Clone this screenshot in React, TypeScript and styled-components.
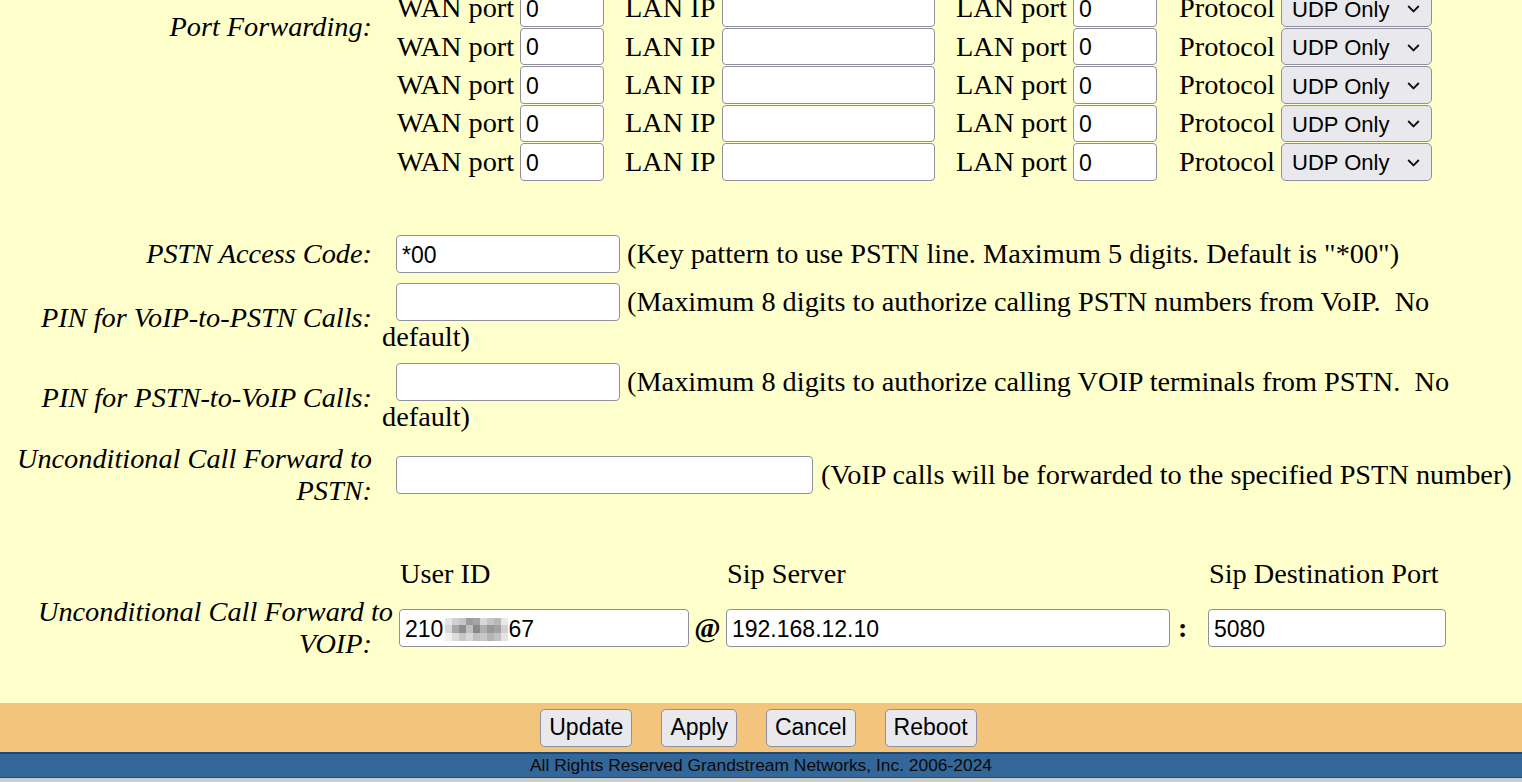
import React from "react";
import styled, { createGlobalStyle } from "styled-components";

const GlobalStyle = createGlobalStyle`
  html, body {
    margin: 0;
    padding: 0;
    height: 100%;
    overflow: hidden;
  }
  body {
    background: #ffffcc;
    color: #000;
    font-family: "Liberation Serif", "Times New Roman", serif;
  }
  #root {
    height: 100%;
  }
`;

const PORT_ROWS = 8;

const MOSAIC = [
  ["#e6e6e6", "#d2d2d2", "#c6c6c6", "#9c9c9c", "#a4a4a4", "#d8d8d8", "#c4c4c4", "#b8b8b8", "#e8e8e8"],
  ["#d8d8d8", "#a8a8a8", "#8e8e8e", "#c0c0c0", "#888888", "#b0b0b0", "#989898", "#a2a2a2", "#d0d0d0"],
  ["#f0f0f0", "#dcdcdc", "#c8c8c8", "#d8d8d8", "#c0c0c0", "#c8c8c8", "#b4b4b4", "#c2c2c2", "#e4e4e4"],
];

const Chevron = () => (
  <ChevronIcon width="13" height="8" viewBox="0 0 13 8">
    <path d="M1.2 1.2 L6.5 6.5 L11.8 1.2" fill="none" stroke="#111" strokeWidth="1.9" />
  </ChevronIcon>
);

const PortRow = () => (
  <PortLine>
    <PortLabel>WAN port</PortLabel>
    <TextInput $w={84} defaultValue="0" />
    <PortLabel $lead={21}>LAN IP</PortLabel>
    <TextInput $w={213} defaultValue="" />
    <PortLabel $lead={21}>LAN port</PortLabel>
    <TextInput $w={84} defaultValue="0" />
    <PortLabel $lead={22}>Protocol</PortLabel>
    <SelectWrap>
      <Select defaultValue="udp">
        <option value="udp">UDP Only</option>
        <option value="tcp">TCP Only</option>
        <option value="both">TCP/UDP</option>
      </Select>
      <Chevron />
    </SelectWrap>
  </PortLine>
);

const App: React.FC = () => {
  return (
    <Page>
      <GlobalStyle />
      <Main>
        <Form>
          <FormRow $after={43.5}>
            <Label>Port Forwarding:</Label>
            <PortList>
              {Array.from({ length: PORT_ROWS }).map((_, i) => (
                <PortRow key={i} />
              ))}
            </PortList>
          </FormRow>

          <FormRow>
            <Label>PSTN Access Code:</Label>
            <Cell>
              <CellInput $w={224} defaultValue="*00" />
              (Key pattern to use PSTN line. Maximum 5 digits. Default is "*00")
            </Cell>
          </FormRow>

          <FormRow>
            <Label>PIN for VoIP-to-PSTN Calls:</Label>
            <Cell>
              <CellInput $w={224} defaultValue="" />
              (Maximum 8 digits to authorize calling PSTN numbers from VoIP.{"\u00a0"} No default)
            </Cell>
          </FormRow>

          <FormRow>
            <Label>PIN for PSTN-to-VoIP Calls:</Label>
            <Cell>
              <CellInput $w={224} defaultValue="" />
              (Maximum 8 digits to authorize calling VOIP terminals from PSTN.{"\u00a0"} No default)
            </Cell>
          </FormRow>

          <FormRow>
            <Label>Unconditional Call Forward to PSTN:</Label>
            <Cell>
              <CellInput $w={417} $after={8} defaultValue="" />
              (VoIP calls will be forwarded to the specified PSTN number)
            </Cell>
          </FormRow>
        </Form>

        <VoipGrid>
          <ColHead $col={3}>User ID</ColHead>
          <ColHead $col={5}>Sip Server</ColHead>
          <ColHead $col={7}>Sip Destination Port</ColHead>

          <VoipLabel>
            <LabelLine>Unconditional Call Forward to</LabelLine>
            <LabelLine $inset={21}>VOIP:</LabelLine>
          </VoipLabel>
          <MaskedInput>
            210
            <Mosaic>
              {MOSAIC.flat().map((c, i) => (
                <MosaicCell key={i} style={{ background: c }} />
              ))}
            </Mosaic>
            67
          </MaskedInput>
          <Sep>@</Sep>
          <TextInput $w={444} $h={38} defaultValue="192.168.12.10" />
          <Sep $left={8}>:</Sep>
          <TextInput $w={238} $h={38} defaultValue="5080" />
        </VoipGrid>
      </Main>

      <ButtonBar>
        <Button>Update</Button>
        <Button>Apply</Button>
        <Button>Cancel</Button>
        <Button>Reboot</Button>
      </ButtonBar>
      <Footer>All Rights Reserved Grandstream Networks, Inc. 2006-2024</Footer>
      <BottomStrip />
    </Page>
  );
};

const Page = styled.div`
  display: flex;
  flex-direction: column;
  height: 100vh;
`;

const Main = styled.main`
  flex: 1;
  min-height: 0;
  overflow: hidden;
  display: flex;
  flex-direction: column;
  justify-content: flex-end;
  padding: 0 7px 43px 0;
`;

const Form = styled.div`
  display: flex;
  flex-direction: column;
  gap: 10.5px;
`;

const FormRow = styled.div<{ $after?: number }>`
  display: grid;
  grid-template-columns: 372px 1fr;
  column-gap: 10px;
  align-items: center;
  margin-bottom: ${(p) => p.$after ?? 0}px;
`;

const Label = styled.div`
  font-style: italic;
  font-size: 28.3px;
  line-height: 32px;
  text-align: right;
`;

const Cell = styled.div`
  font-size: 28.3px;
  line-height: 32px;
`;

const PortList = styled.div`
  display: flex;
  flex-direction: column;
`;

const PortLine = styled.div`
  display: grid;
  grid-template-columns: 123px 84px 118px 213px 138px 84px 124px 151px;
  align-items: center;
  height: 38.4px;
  padding-left: 15px;
`;

const PortLabel = styled.span<{ $lead?: number }>`
  padding-left: ${(p) => p.$lead ?? 0}px;
  font-size: 28.3px;
  line-height: 32px;
  white-space: nowrap;
`;

const TextInput = styled.input<{ $w: number; $h?: number }>`
  box-sizing: border-box;
  width: ${(p) => p.$w}px;
  height: ${(p) => p.$h ?? 37.5}px;
  margin: 0;
  padding: 2.6px 5px 0;
  border: 1px solid #8f8f9d;
  border-radius: 4px;
  background: #fff;
  color: #000;
  font-family: "Liberation Sans", Arial, sans-serif;
  font-size: 23px;
  outline: none;
`;

const CellInput = styled(TextInput)<{ $after?: number }>`
  vertical-align: baseline;
  margin: 0 ${(p) => p.$after ?? 7}px 0 14px;
`;

const SelectWrap = styled.div`
  position: relative;
  width: 151px;
  height: 37.5px;
`;

const Select = styled.select`
  appearance: none;
  box-sizing: border-box;
  width: 100%;
  height: 100%;
  margin: 0;
  padding: 2px 30px 0 10px;
  border: 1px solid #8f8f9d;
  border-radius: 5px;
  background: #e9e9ed;
  color: #000;
  font-family: "Liberation Sans", Arial, sans-serif;
  font-size: 22px;
  outline: none;
`;

const ChevronIcon = styled.svg`
  position: absolute;
  right: 12px;
  top: 50%;
  transform: translateY(-40%);
  pointer-events: none;
`;

const VoipGrid = styled.div`
  display: grid;
  grid-template-columns: 393px 6px 290px 37px 444px 38px 238px;
  grid-template-rows: 32px 64px;
  row-gap: 6px;
  align-items: center;
  margin-top: 51px;
`;

const ColHead = styled.div<{ $col: number }>`
  grid-column: ${(p) => p.$col};
  grid-row: 1;
  padding-left: 1px;
  font-size: 28.3px;
  line-height: 32px;
  white-space: nowrap;
`;

const VoipLabel = styled.div`
  grid-column: 1;
  grid-row: 2;
  font-style: italic;
  font-size: 28.3px;
  line-height: 32px;
  text-align: right;
  white-space: nowrap;
`;

const LabelLine = styled.span<{ $inset?: number }>`
  display: block;
  padding-right: ${(p) => p.$inset ?? 0}px;
`;

const MaskedInput = styled.div`
  grid-column: 3;
  box-sizing: border-box;
  display: flex;
  align-items: center;
  width: 290px;
  height: 38px;
  padding: 2.6px 5px 0;
  border: 1px solid #8f8f9d;
  border-radius: 4px;
  background: #fff;
  font-family: "Liberation Sans", Arial, sans-serif;
  font-size: 23px;
`;

const Mosaic = styled.span`
  display: grid;
  grid-template-columns: repeat(9, 7px);
  grid-auto-rows: 7.7px;
  margin: 0 0 0 2px;
`;

const MosaicCell = styled.span`
  display: block;
`;

const Sep = styled.div<{ $left?: number }>`
  font-size: 28.3px;
  font-weight: bold;
  line-height: 32px;
  text-align: ${(p) => (p.$left ? "left" : "center")};
  padding-left: ${(p) => p.$left ?? 0}px;
`;

const ButtonBar = styled.div`
  display: flex;
  align-items: center;
  justify-content: center;
  gap: 29px;
  height: 49px;
  padding-right: 5px;
  background: #f2c47c;
`;

const Button = styled.button`
  box-sizing: border-box;
  height: 38px;
  padding: 0 8px;
  border: 1px solid #8f8f9d;
  border-radius: 5px;
  background: #e9e9ed;
  color: #000;
  font-family: "Liberation Sans", Arial, sans-serif;
  font-size: 23px;
  cursor: pointer;
`;

const Footer = styled.div`
  height: 23px;
  border-top: 2px solid #1f4a75;
  border-bottom: 1px solid #1f4a75;
  background: #336699;
  color: #0a0a0a;
  font-family: "Liberation Sans", Arial, sans-serif;
  font-size: 17.4px;
  line-height: 23px;
  text-align: center;
`;

const BottomStrip = styled.div`
  height: 4px;
  background: #cccccc;
`;

export default App;
